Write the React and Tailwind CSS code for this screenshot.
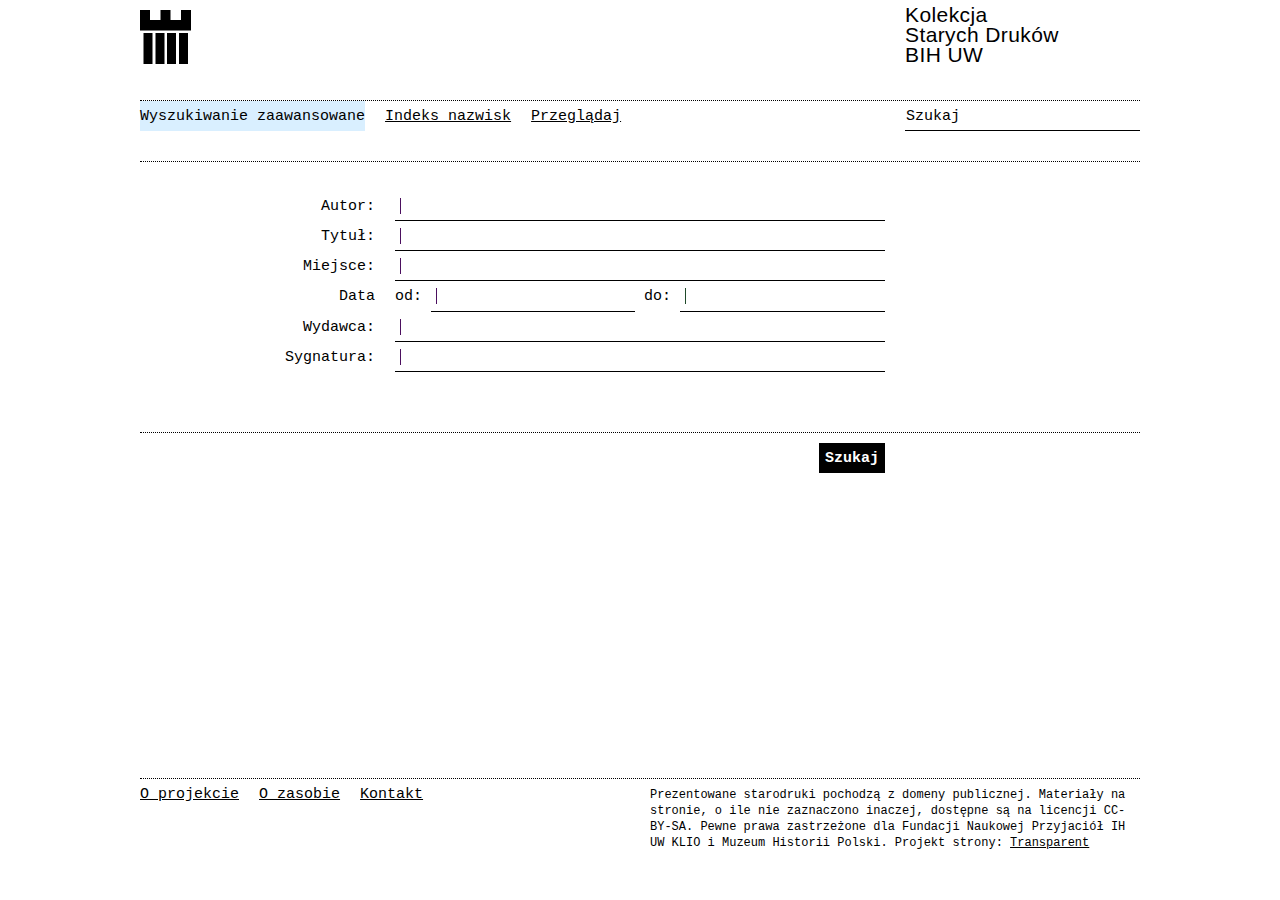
const mono = "font-['Liberation_Mono',monospace]";

const fields = [
  { label: "Autor:" },
  { label: "Tytuł:" },
  { label: "Miejsce:" },
  { label: "Data", range: true },
  { label: "Wydawca:" },
  { label: "Sygnatura:" },
];

function Logo() {
  return (
    <svg width="51" height="54" viewBox="0 0 51 54" className="block">
      <path d="M0 0H10V10H20.5V0H30.5V10H41V0H51V20.5H0Z" fill="#000" />
      <rect x="3.5" y="23" width="9" height="31" fill="#000" />
      <rect x="15.5" y="23" width="9" height="31" fill="#000" />
      <rect x="27" y="23" width="9" height="31" fill="#000" />
      <rect x="39" y="23" width="9" height="31" fill="#000" />
    </svg>
  );
}

function Field({ className = "", caret = "bg-[#4b0f5e]" }) {
  return (
    <div className={`flex items-start border-b border-black pl-[5px] pt-[7px] ${className}`}>
      <span className={`block h-[16px] w-px ${caret}`} />
    </div>
  );
}

export default function App() {
  return (
    <div className={`mx-auto min-h-[900px] w-[1000px] bg-white text-[15px] leading-[17px] text-black ${mono}`}>
      <header className="flex h-[100px]">
        <div className="w-[765px] pt-[10px]">
          <Logo />
        </div>
        <div className="pt-[5px] font-['Liberation_Sans',sans-serif] text-[21px] leading-[20px] tracking-[0.4px]">
          <div>Kolekcja</div>
          <div>Starych Druków</div>
          <div>BIH UW</div>
        </div>
      </header>

      <nav className="flex h-[62px] items-start border-y border-dotted border-black">
        <a className="flex h-[30px] items-start bg-[#d9efff] pt-[7px]">Wyszukiwanie zaawansowane</a>
        <a className="ml-5 pt-[7px] underline">Indeks nazwisk</a>
        <a className="ml-5 pt-[7px] underline">Przeglądaj</a>
        <div className="ml-auto h-[30px] w-[235px] border-b border-black pl-px pt-[7px]">Szukaj</div>
      </nav>

      <form className="flex h-[271px] flex-col border-b border-dotted border-black pt-[29px]">
        {fields.map((field) => (
          <div key={field.label} className={`flex ${field.range ? "h-[31px]" : "h-[30px]"}`}>
            <label className="w-[235px] pt-[7px] text-right">{field.label}</label>
            {field.range ? (
              <div className="ml-5 flex w-[490px]">
                <span className="w-[36px] pt-[7px]">od:</span>
                <Field className="w-[204px]" />
                <span className="ml-[9px] w-[36px] pt-[7px]">do:</span>
                <Field className="w-[205px]" caret="bg-[#1f4a2a]" />
              </div>
            ) : (
              <Field className="ml-5 w-[490px]" />
            )}
          </div>
        ))}
      </form>

      <div className="flex h-[345px] w-[745px] items-start justify-end pt-[10px]">
        <button type="button" className="h-[30px] w-[66px] bg-black pt-px font-bold text-white">
          Szukaj
        </button>
      </div>

      <footer className="flex border-t border-dotted border-black pt-[7px]">
        <div className="flex w-[510px] items-start gap-5">
          <a className="underline">O projekcie</a>
          <a className="underline">O zasobie</a>
          <a className="underline">Kontakt</a>
        </div>
        <p className="w-[490px] pt-px text-[12px] leading-4">
          Prezentowane starodruki pochodzą z domeny publicznej. Materiały na stronie, o ile nie zaznaczono inaczej, dostępne są na licencji CC-BY-SA. Pewne prawa zastrzeżone dla Fundacji Naukowej Przyjaciół IH UW KLIO i Muzeum Historii Polski. Projekt strony: <a className="underline">Transparent</a>
        </p>
      </footer>
    </div>
  );
}
